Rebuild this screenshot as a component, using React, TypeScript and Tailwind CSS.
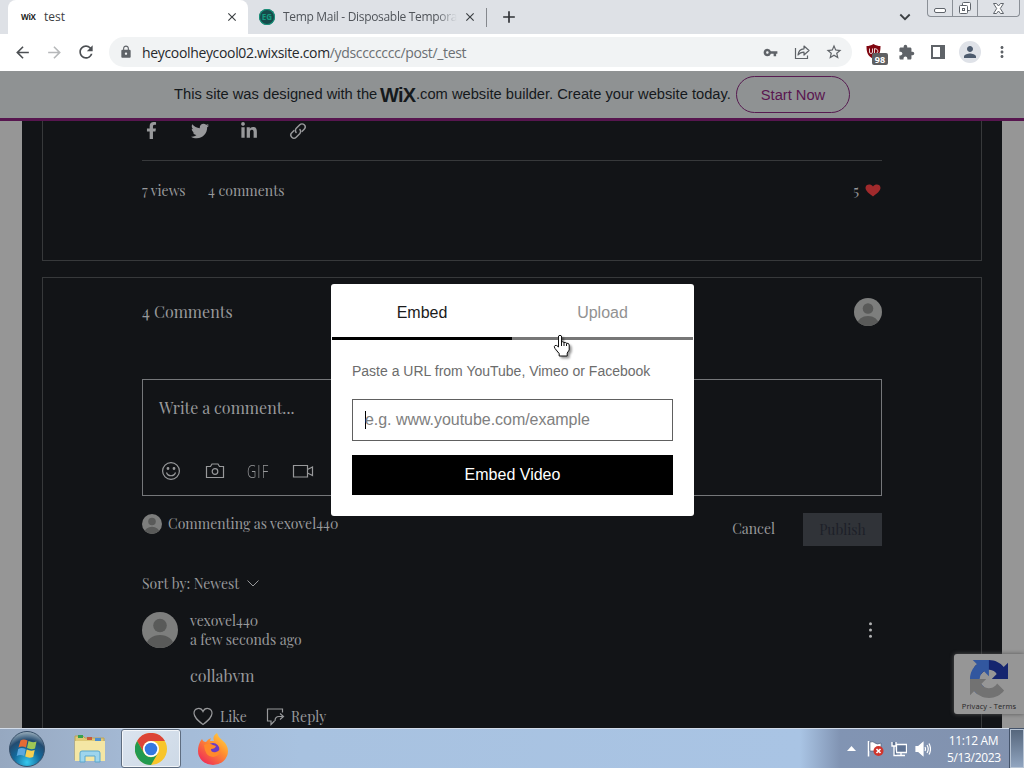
import React from 'react';
import { FaFacebookF, FaLinkedinIn, FaTwitter } from 'react-icons/fa';
import {
  MdAdd,
  MdArrowBack,
  MdArrowForward,
  MdClose,
  MdExtension,
  MdLock,
  MdMoreVert,
  MdPerson,
  MdRefresh,
  MdStarBorder,
  MdVpnKey,
} from 'react-icons/md';

const ui = "font-['Open_Sans','Noto_Sans',sans-serif]";
const sans = "font-['Liberation_Sans',Arial,sans-serif]";
const serif = "font-['Playfair_Display','Liberation_Serif',serif]";

function Avatar({ className }: { className: string }) {
  return (
    <svg viewBox="0 0 36 36" className={`shrink-0 rounded-full ${className}`}>
      <rect width="36" height="36" fill="#7d7e7d" />
      <circle cx="18" cy="13.5" r="6.8" fill="#595a59" />
      <ellipse cx="18" cy="33" rx="13.5" ry="10" fill="#595a59" />
    </svg>
  );
}

function TabStrip() {
  return (
    <div className={`flex h-[34px] bg-[#dee1e6] pl-2 text-[12px] ${ui}`}>
      <div className="flex w-60 items-center rounded-t-lg bg-white pl-[13px] pr-[9px] text-[#3c4043]">
        <span className="w-[23px] text-[8px] font-bold tracking-[-0.3px] text-[#222]">WiX</span>
        <span className="flex-1">test</span>
        <MdClose className="size-[14px] text-[#3c4043]" />
      </div>
      <div className="flex w-[238px] items-center pl-[11px] pr-1.5 text-[#50545a]">
        <span className="flex size-4 shrink-0 items-center justify-center rounded-full bg-[#164b4b] text-[8px] font-bold text-[#159b80] ring-1 ring-[#16977d] ring-inset">
          EG
        </span>
        <span className="ml-2 w-[174px] whitespace-nowrap tracking-[-0.32px] [mask-image:linear-gradient(to_right,black_88%,transparent)]">
          Temp Mail - Disposable Tempora
        </span>
        <MdClose className="ml-1.5 size-[14px] shrink-0 text-[#3c4043]" />
      </div>
      <div className="mt-2 h-[19px] w-px bg-[#85888d]" />
      <MdAdd className="ml-3 mt-[7px] size-[20px] text-[#2f3236]" />
      <svg className="ml-auto mt-[11px] size-[12px]" viewBox="0 0 12 12" fill="none" stroke="#3c4043" strokeWidth="1.8">
        <path d="M1.3 3.5 6 8.2l4.7-4.7" />
      </svg>
      <div className="ml-4 mr-[4px] flex h-[17px] w-[93px] rounded-b-[4px] border border-t-0 border-[#8a8f96]">
        <div className="flex w-[25px] items-center justify-center border-r border-[#8a8f96]">
          <span className="mt-1 h-[5px] w-3 rounded-[2px] border border-[#5f646b] bg-white" />
        </div>
        <div className="flex w-[25px] items-center justify-center border-r border-[#8a8f96]">
          <svg className="size-[14px]" viewBox="0 0 14 14" fill="#fff" stroke="#5f646b">
            <rect x="4.5" y="1.5" width="8" height="8" rx="1" />
            <rect x="1.5" y="4.5" width="8" height="8" rx="1" />
            <rect x="4.5" y="7.5" width="2" height="2" />
          </svg>
        </div>
        <div className="flex flex-1 items-center justify-center">
          <svg className="size-[13px]" viewBox="0 0 13 13" fill="#fff" stroke="#5f646b">
            <path d="M1.5 1.5h3l2 2.5 2-2.5h3l-3.2 5 3.2 5h-3l-2-2.5-2 2.5h-3l3.2-5z" />
          </svg>
        </div>
      </div>
    </div>
  );
}

const cell = 'flex w-8 shrink-0 items-center justify-center';

function Toolbar() {
  return (
    <div className={`flex h-[37px] items-center bg-white pb-px pl-1.5 text-[#5f6368] ${ui}`}>
      <div className={cell}><MdArrowBack className="size-[19px] text-[#4c4f53]" /></div>
      <div className={cell}><MdArrowForward className="size-[19px] text-[#b6b8ba]" /></div>
      <div className={cell}><MdRefresh className="size-[20px] text-[#4c4f53]" /></div>
      <div className="ml-[7px] flex h-[30px] w-[743px] items-center rounded-full bg-[#f1f3f4] pl-2.5 pr-0.5">
        <MdLock className="size-[14px]" />
        <span className="ml-[9px] flex-1 whitespace-nowrap text-[14px] tracking-[-0.34px] text-[#6b6f73]">
          <span className="text-[#26292c]">heycoolheycool02.wixsite.com</span>/ydsccccccc/post/_test
        </span>
        <div className={cell}><MdVpnKey className="size-[15px]" /></div>
        <div className={cell}>
          <svg className="size-4" viewBox="0 0 16 16" fill="none" stroke="currentColor" strokeWidth="1.2">
            <path d="M1.5 4v10.5h12V11.5" />
            <path d="M4 11c.4-4 2.6-6 6-6.2V2l5 4.5-5 4.5V8.2C7.5 8.2 5.5 9 4 11z" strokeLinejoin="round" />
          </svg>
        </div>
        <div className={cell}><MdStarBorder className="size-[18px]" /></div>
      </div>
      <div className={`ml-1.5 ${cell}`}>
        <div className="relative size-4">
          <svg className="h-[15px] w-[15px]" viewBox="0 0 15 15">
            <path d="M7.5 0C5 1.5 3 2 .5 2c0 6 1 10 7 13 6-3 7-7 7-13C12 2 10 1.5 7.5 0z" fill="#800610" />
            <path d="M3.500 4.5v3.5q0 1.5 1.5 1.5T6.5 8V4.5M8.5 9.5V4.500q3.500.5 3.500 2.500t-2 2.500" fill="none" stroke="#e8d5d6" />
          </svg>
          <span className="absolute left-[6px] top-[9px] flex h-3 w-4 items-center justify-center rounded-[2px] bg-[#5f6062] text-[9px] font-bold leading-none text-white">
            98
          </span>
        </div>
      </div>
      <div className={cell}><MdExtension className="size-[17px]" /></div>
      <div className={cell}>
        <div className="h-[14px] w-[14px] border-2 border-r-[5px] border-[#5f6368]" />
      </div>
      <div className={cell}>
        <div className="flex size-[22px] items-center justify-center rounded-full bg-[#dfe2e8]">
          <MdPerson className="size-[18px] text-[#4d5b6e]" />
        </div>
      </div>
      <div className={cell}><MdMoreVert className="size-[18px]" /></div>
    </div>
  );
}

function WixBanner() {
  return (
    <div className={`flex h-[50px] shrink-0 items-center whitespace-nowrap border-b-[3px] border-[#57164f] bg-[#8f9293] pl-[174px] text-[14.7px] text-[#15191c] ${sans}`}>
      <span className="w-[206px]">This site was designed with the</span>
      <span className="w-[36px] text-[20px] font-bold leading-none tracking-[-0.8px]">WiX</span>
      <span className="w-[320px]">.com website builder. Create your website today.</span>
      <span className="flex h-[37px] w-[114px] items-center justify-center rounded-full border border-[#571a50] pt-px text-[#5a1650]">
        Start Now
      </span>
    </div>
  );
}

function PostFooter() {
  return (
    <section className="mx-5 h-[140px] border border-t-0 border-[#37393b] px-[99px]">
      <div className="flex h-[39px] items-start gap-[31px] pl-px pt-px text-[#98999b]">
        <FaFacebookF className="size-[17px]" />
        <FaTwitter className="size-[18px]" />
        <FaLinkedinIn className="size-[18px]" />
        <svg className="size-[18px]" viewBox="0 0 18 18" fill="none" stroke="currentColor" strokeWidth="1.5">
          <path d="M7.5 10.8a3 3 0 0 1-.2-4.5l3.500-3.500a3.100 3.100 0 0 1 4.400 4.400l-2.500 2.500" />
          <path d="M10.5 7.2a3 3 0 0 1 .2 4.5l-3.500 3.500a3.100 3.100 0 0 1-4.400-4.400l2.500-2.500" />
        </svg>
      </div>
      <div className="flex h-[60px] items-center border-t border-[#37393b] text-[14px] text-[#98999b]">
        <span className="w-[66px] whitespace-nowrap">7 views</span>
        <span className="flex-1">4 comments</span>
        <span>5</span>
        <svg className="ml-1.5 mr-px h-[13px] w-4" viewBox="0 0 16 13">
          <path d="M8 12.500C4 9.500.5 7 .5 3.800.5.3 5.500-.8 8 2.500c2.500-3.300 7.500-2.200 7.500 1.300C15.500 7 12 9.500 8 12.500z" fill="#a02a2c" />
        </svg>
      </div>
    </section>
  );
}

function CommentForm() {
  return (
    <>
      <div className="mt-[53px] flex h-[117px] flex-col justify-between border border-[#75777a] px-4 pb-3.5 pt-[16px] text-[#98999b]">
        <span className="text-[16px] leading-[24px]">Write a comment...</span>
        <div className="flex items-center pl-[2px]">
          <svg className="size-5" viewBox="0 0 20 20" fill="none" stroke="currentColor" strokeWidth="1.2">
            <circle cx="10" cy="10" r="8.4" />
            <path d="M5.500 11.500c1.200 4.300 7.800 4.300 9 0" />
            <circle cx="7" cy="7.500" r=".8" fill="currentColor" />
            <circle cx="13" cy="7.500" r=".8" fill="currentColor" />
          </svg>
          <svg className="ml-6 size-5" viewBox="0 0 20 20" fill="none" stroke="currentColor" strokeWidth="1.2">
            <path d="M1.500 5.500h4l1.500-2.500h6l1.500 2.500h4v11h-17z" />
            <circle cx="10" cy="10.500" r="2.800" />
          </svg>
          <span className={`ml-[22px] w-6 text-[19px] font-light leading-5 tracking-[1.5px] ${ui}`}>
            <span className="inline-block origin-left scale-x-[0.68]">GIF</span>
          </span>
          <svg className="ml-[21px] h-5 w-[22px]" viewBox="0 0 22 20" fill="none" stroke="currentColor" strokeWidth="1.2">
            <path d="M1.500 4.500h14v11.500h-14zM15.500 8.500 20.500 6v8.500l-5-2.500" />
          </svg>
        </div>
      </div>
      <div className="flex h-[66px] items-start text-[14px] leading-5 text-[#98999b]">
        <Avatar className="mt-[18px] size-5" />
        <span className="ml-1.5 mt-[18px] flex-1">Commenting as vexovel440</span>
        <span className="mr-7 mt-[23px]">Cancel</span>
        <span className="mt-[17px] flex h-[33px] w-[79px] items-center justify-center bg-[#303338] text-[#1d2028]">
          Publish
        </span>
      </div>
    </>
  );
}

function Comment() {
  return (
    <div className="flex pt-[17px] text-[#98999b]">
      <Avatar className="size-9" />
      <div className="ml-3 flex-1 text-[14px] leading-[19px]">
        <div className="-mt-px">vexovel440</div>
        <div>a few seconds ago</div>
        <div className="mt-[15px] text-[16px] leading-6">collabvm</div>
        <div className="mt-[19px] flex items-center pl-[3px]">
          <svg className="h-[19px] w-5" viewBox="0 0 20 19" fill="none" stroke="currentColor" strokeWidth="1.2">
            <path d="M10 17.500C5 13.500 1 10.500 1 6.300 1 .5 8 0 10 4.500 12 0 19 .5 19 6.300c0 4.200-4 7.200-9 11.200z" />
          </svg>
          <span className="ml-[7px] w-[46px]">Like</span>
          <svg className="h-[19px] w-[19px]" viewBox="0 0 19 19" fill="none" stroke="currentColor" strokeWidth="1.2">
            <path d="M16.500 5.500V2H1.500v12H5v3.500L8.500 14" />
            <path d="M9 14c0-3 1-4.500 4-4.500h4M14 6.500l3.500 3-3.500 3" />
          </svg>
          <span className="ml-1.5">Reply</span>
        </div>
      </div>
      <svg className="mr-[9px] mt-[10px] h-4 w-[5px]" viewBox="0 0 5 16" fill="#b0b1b2">
        <circle cx="2.5" cy="1.7" r="1.5" />
        <circle cx="2.5" cy="8" r="1.5" />
        <circle cx="2.5" cy="14.3" r="1.5" />
      </svg>
    </div>
  );
}

function Comments() {
  return (
    <section className="mx-5 mt-4 h-[470px] border border-[#37393b] px-[99px] pt-5">
      <div className="flex h-7 items-center justify-between text-[16px] text-[#98999b]">
        <span>4 Comments</span>
        <Avatar className="size-7" />
      </div>
      <CommentForm />
      <div className="mt-[10px] flex h-[23px] items-center text-[14px] text-[#98999b]">
        Sort by: Newest
        <svg className="ml-2 h-[7px] w-3" viewBox="0 0 12 7" fill="none" stroke="currentColor">
          <path d="m.5.5 5.500 5.500 5.500-5.500" />
        </svg>
      </div>
      <Comment />
    </section>
  );
}

function VideoModal() {
  return (
    <div className={`absolute left-[331px] top-[284px] h-[232px] w-[363px] rounded-[3px] bg-white px-px ${sans}`}>
      <div className="flex h-14 text-[16px]">
        <div className="flex w-[180px] items-center justify-center border-b-[3px] border-black pt-1 text-[#1b1b1b]">Embed</div>
        <div className="flex flex-1 items-center justify-center border-b-[3px] border-[#777] pt-1 text-[#929292]">Upload</div>
      </div>
      <div className="px-5 pt-[21px]">
        <p className="whitespace-nowrap text-[14px] leading-5 text-[#6c6c6c]">Paste a URL from YouTube, Vimeo or Facebook</p>
        <div className="mt-[18px] flex h-[42px] items-center border border-[#606060] pl-3 text-[16px] text-[#808080]">
          <span className="-mr-px h-[18px] w-px bg-black" />
          <span className="tracking-[-0.04px]">e.g. www.youtube.com/example</span>
        </div>
        <div className="mt-3.5 flex h-10 items-center justify-center bg-black text-[16px] text-white">Embed Video</div>
      </div>
    </div>
  );
}

function Recaptcha() {
  return (
    <div className={`absolute left-[954px] top-[654px] flex h-[60px] w-[70px] flex-col items-center rounded-l-[3px] bg-[#969696] pt-1.5 shadow-[0_0_4px_#555] ${ui}`}>
      <svg className="size-[38px]" viewBox="0 0 64 64">
        <path
          d="M64 31.955l-.033-1.37V4.687l-7.16 7.16C50.948 4.674 42.033.093 32.050.093c-10.400 0-19.622 4.960-25.458 12.640l11.736 11.860a15.550 15.550 0 0 1 4.754-5.334c2.050-1.600 4.952-2.906 8.968-2.906.485 0 .860.057 1.135.163 4.976.393 9.288 3.140 11.828 7.124l-8.307 8.307L64 31.953"
          fill="#15256f"
        />
        <path
          d="M31.862.094l-1.370.033H4.594l7.160 7.160C4.580 13.147 0 22.060 0 32.046c0 10.400 4.960 19.622 12.640 25.458L24.500 45.768a15.550 15.550 0 0 1-5.334-4.754c-1.600-2.050-2.906-4.952-2.906-8.968 0-.485.057-.860.163-1.135.393-4.976 3.140-9.288 7.124-11.828l8.307 8.307L31.860.095"
          fill="#32579f"
        />
        <path
          d="M.001 32.045l.033 1.370v25.898l7.160-7.160c5.860 7.173 14.774 11.754 24.760 11.754 10.400 0 19.622-4.960 25.458-12.640l-11.736-11.860a15.550 15.550 0 0 1-4.754 5.334c-2.050 1.600-4.952 2.906-8.968 2.906-.485 0-.860-.057-1.135-.163-4.976-.393-9.288-3.140-11.828-7.124l8.307-8.307c-10.522.040-22.400.066-27.295-.005"
          fill="#727272"
        />
      </svg>
      <span className="mt-[3px] whitespace-nowrap text-[7.5px] leading-[10px] tracking-[0.1px] text-[#252525]">Privacy - Terms</span>
    </div>
  );
}

function HandCursor() {
  return (
    <svg className="absolute left-[553px] top-[334px] h-[24px] w-[19px] drop-shadow-[2px_2px_1px_rgba(0,0,0,0.4)]" viewBox="0 0 19 24">
      <path
        d="M5.500 2q1.500-1.500 3 0v6q1.300-.8 2.500.5 1.300-.5 2.500.7 2.500-.3 2.700 1.800v5l-2 3v3h-8v-2.500L2 14.500q-1.500-2 0-3 1.500-.8 3.500 1.500z"
        fill="#fff"
        stroke="#111"
      />
      <path d="M8.500 8v4M11 8.500V12M13.500 9.500V12" stroke="#111" />
    </svg>
  );
}

function StartOrb() {
  return (
    <svg className="size-9" viewBox="0 0 36 36">
      <defs>
        <radialGradient id="orb" cx="50%" cy="88%" r="85%">
          <stop offset="0" stopColor="#35c8ee" />
          <stop offset=".45" stopColor="#13699b" />
          <stop offset=".75" stopColor="#234b70" />
          <stop offset="1" stopColor="#8fa5b5" />
        </radialGradient>
      </defs>
      <circle cx="18" cy="18" r="17.5" fill="url(#orb)" stroke="#38506a" />
      <path d="M11.500 9.500q3-2 7 0l-1.500 7q-4-2-7.500 0z" fill="#e56b35" />
      <path d="M19.500 10q4 2 8 .5l-1.500 7q-4 1.500-8-.5z" fill="#9ec655" />
      <path d="M9.200 18q3.500-2 7.500 0l-1.500 7q-4-2-7.500 0z" fill="#5aa8df" />
      <path d="M17.700 18.500q4 2 8 .5l-1.500 7q-4 1.500-8-.5z" fill="#f6cf51" />
    </svg>
  );
}

function ExplorerIcon() {
  return (
    <svg className="h-[30px] w-8" viewBox="0 0 32 30">
      <path d="M1 2h8l2 2h19v22H1z" fill="#dfc977" stroke="#bba45a" />
      <path d="M4 1h5v3H4z" fill="#35a04f" />
      <path d="M13 3h5v3h-5z" fill="#c85a3c" />
      <path d="M21 4h6v3h-6z" fill="#4d8ed0" />
      <path d="M1 7h30v20H1z" fill="#f4e6a4" />
      <path d="M6 28V19q0-2 2-2h16q2 0 2 2v9h-5v-6H11v6z" fill="#9ed5ed" stroke="#5ba7cd" />
    </svg>
  );
}

function ChromeIcon() {
  return (
    <svg className="size-8" viewBox="0 0 32 32">
      <circle cx="16" cy="16" r="16" fill="#f8c52b" />
      <path d="M2.100 8A16 16 0 0 1 29.900 8H16a8 8 0 0 0-7 12z" fill="#dc4437" />
      <path d="M2.100 8A16 16 0 0 0 16 32l7-12a8 8 0 0 1-14 0z" fill="#229a50" />
      <circle cx="16" cy="16" r="8" fill="#fff" />
      <circle cx="16" cy="16" r="6.3" fill="#3478e0" />
    </svg>
  );
}

function FirefoxIcon() {
  return (
    <svg className="size-8" viewBox="0 0 32 32">
      <defs>
        <linearGradient id="fox" x1="1" y1="0" x2=".2" y2="1">
          <stop offset="0" stopColor="#ffe34a" />
          <stop offset=".45" stopColor="#ff9130" />
          <stop offset="1" stopColor="#ef2958" />
        </linearGradient>
      </defs>
      <path d="M5 6q1 3 4 3 2-3 5-4l-1 3h4q-2-5 3-8 1 4 5 7 6 5 6 11a15 14 0 0 1-30 0Q1 11 5 6z" fill="url(#fox)" />
      <circle cx="16" cy="16.5" r="6.5" fill="#6b3bc5" />
      <path d="M7 12q5-3 9 0l3 1q-1 3-5 3 0 4 5 3 4-1 4-5 2 9-7 10-8 0-9-12z" fill="#ff8a2b" />
    </svg>
  );
}

function Taskbar() {
  return (
    <div className={`flex h-10 items-center border-t border-[#d2dcea] bg-[linear-gradient(to_right,#96a8c0_0px,#a3b8d3_120px,#a8c2e0_300px,#a9c4e4_800px,#8194b3_840px,#8292ae_100%)] pl-[9px] ${ui}`}>
      <StartOrb />
      <div className="ml-[29px]"><ExplorerIcon /></div>
      <div className="ml-[15px] flex h-[39px] w-[60px] items-center justify-center rounded-[3px] border border-[#5e6d80] bg-[linear-gradient(135deg,#dbe4ef,#cdd9e6)] ring-1 ring-white/70 ring-inset">
        <ChromeIcon />
      </div>
      <div className="ml-4 flex-1"><FirefoxIcon /></div>
      <svg className="mr-[11px] h-[5px] w-[9px]" viewBox="0 0 9 5">
        <path d="M4.500 0 9 5H0z" fill="#fff" />
      </svg>
      <svg className="mr-1.5 h-[17px] w-[18px]" viewBox="0 0 18 17">
        <path d="M1.500 1v15.500" stroke="#fff" strokeWidth="1.5" />
        <path d="M3 2q3-1 5 1t6 0v8H3z" fill="#fff" stroke="#475670" strokeWidth=".6" />
        <circle cx="11.5" cy="11" r="5" fill="#d0342c" />
        <path d="m9.500 9 4 4m0-4-4 4" stroke="#fff" strokeWidth="1.6" />
      </svg>
      <svg className="mr-2 h-4 w-4" viewBox="0 0 16 16" fill="#5f7393" stroke="#fff" strokeWidth="1.3">
        <path d="M5.500 3.500h10v8h-10zM6 14.500h8M10 11.500v3" />
        <path d="M1 1v4h4V1M3 5v9.500h3" />
      </svg>
      <svg className="mr-4 h-4 w-4" viewBox="0 0 16 16" fill="none" stroke="#fff" strokeWidth="1.2">
        <path d="M1 5.500h2.500L8 1.500v13L3.500 10.500H1z" fill="#fff" />
        <path d="M10 6q1 2 0 4M12 4q2.500 4 0 8M14 2.500q3 5.500 0 11" />
      </svg>
      <div className="mr-[10px] w-[53px] whitespace-nowrap text-center text-[12px] leading-[17px] tracking-[-0.35px] text-white">
        <div>11:12 AM</div>
        <div>5/13/2023</div>
      </div>
      <div className="h-full w-[14px] border border-[#b7c4d4] bg-linear-to-b from-[#56677d] to-[#91a5c0] ring-1 ring-[#44536a]" />
    </div>
  );
}

export default function App() {
  return (
    <div className="relative h-[768px] w-[1024px] overflow-hidden">
      <TabStrip />
      <Toolbar />
      <div className="flex h-[657px] flex-col overflow-hidden bg-[#969696]">
        <WixBanner />
        <main className={`mx-[22px] flex-1 bg-[#121417] ${serif}`}>
          <PostFooter />
          <Comments />
        </main>
      </div>
      <Taskbar />
      <Recaptcha />
      <VideoModal />
      <HandCursor />
    </div>
  );
}
